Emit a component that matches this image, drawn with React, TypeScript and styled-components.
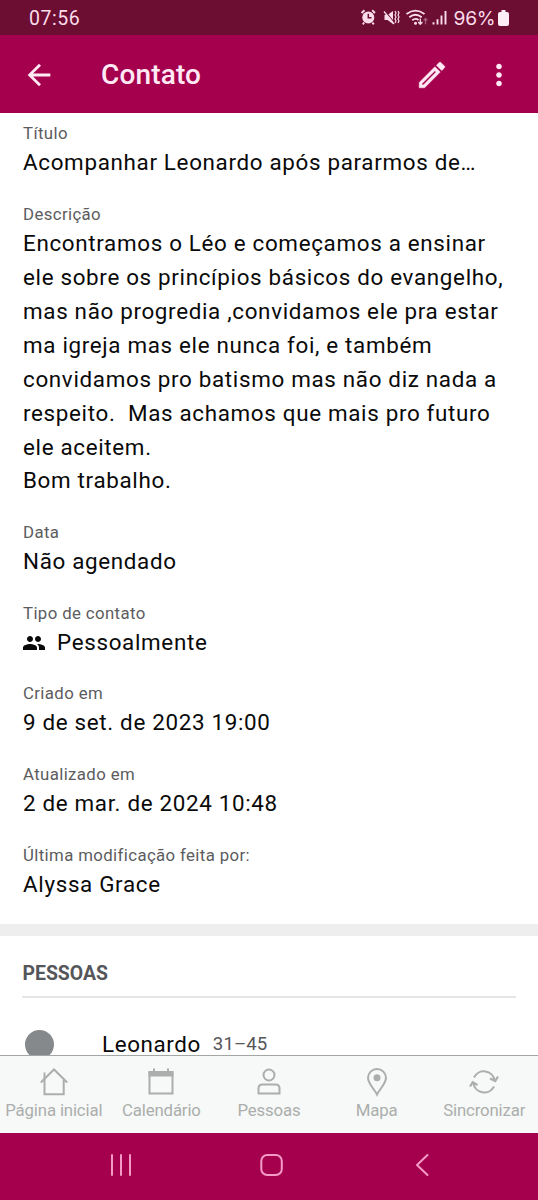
import React from "react";
import styled, { createGlobalStyle } from "styled-components";

const Global = createGlobalStyle`
  * { box-sizing: border-box; }
  body { margin: 0; background: #fff; font-family: Roboto, "Liberation Sans", sans-serif; }
  svg { display: block; flex: none; }
`;

const Screen = styled.div`
  display: flex;
  flex-direction: column;
  width: 538px;
  height: 1200px;
  overflow: hidden;
  background: #fff;
`;

const StatusBar = styled.div`
  display: flex;
  flex: none;
  align-items: center;
  justify-content: space-between;
  height: 35px;
  padding: 1px 29px 0;
  background: #6b0e32;
  color: #fbdcea;
  font-size: 19.5px;
`;

const Clock = styled.span`
  letter-spacing: 0.55px;
`;

const StatusIcons = styled.div`
  display: flex;
  align-items: center;
`;

const Battery = styled.span`
  width: 45px;
  padding-right: 2px;
  font-family: Inter, "Liberation Sans", sans-serif;
  font-size: 19.2px;
  letter-spacing: -0.2px;
  text-align: center;
`;

const AppBar = styled.header`
  display: flex;
  flex: none;
  align-items: center;
  height: 78px;
  padding: 1.5px 22px 0 22px;
  background: #a5004e;
  color: #ffe9f4;
`;

const PageTitle = styled.h1`
  flex: 1;
  margin: 0 0 0 45px;
  font-size: 28px;
  font-weight: 500;
  letter-spacing: 0.15px;
  line-height: 36px;
`;

const Actions = styled.div`
  display: flex;
  align-items: center;
  gap: 33.5px;
`;

const Content = styled.main`
  display: flex;
  flex: 1;
  min-height: 0;
  flex-direction: column;
  overflow: hidden;
`;

const Details = styled.section`
  display: flex;
  flex: none;
  flex-direction: column;
  gap: 22.7px;
  height: 811px;
  padding: 9.4px 23px 0;
`;

const Label = styled.div`
  margin-bottom: 2px;
  color: #5c5c5e;
  font-size: 16.8px;
  letter-spacing: 0.38px;
  line-height: 22px;
`;

const Value = styled.div`
  display: flex;
  align-items: center;
  gap: 12px;
  color: #0a0a0a;
  font-size: 22.4px;
  letter-spacing: 0.67px;
  line-height: 33.92px;
  white-space: pre;
`;

const Divider = styled.div`
  flex: none;
  height: 12px;
  background: #eeeeee;
`;

const People = styled.section`
  flex: none;
  padding: 0 22px;
`;

const SectionTitle = styled.h2`
  height: 62px;
  margin: 0;
  padding: 26px 0 0 0.5px;
  border-bottom: 2px solid #e6e6e7;
  color: #55565a;
  font-size: 19.4px;
  font-weight: 700;
  line-height: 24px;
`;

const PersonRow = styled.div`
  display: flex;
  align-items: center;
  padding: 31.5px 0 0 3px;
`;

const Avatar = styled.span`
  width: 29px;
  height: 29px;
  margin-right: 48px;
  border-radius: 50%;
  background: #85898c;
`;

const PersonName = styled.span`
  color: #0a0a0a;
  font-size: 22.4px;
  letter-spacing: 0.6px;
  line-height: 23px;
`;

const Age = styled.span`
  margin-left: 12px;
  color: #55565a;
  font-size: 18.6px;
  letter-spacing: 0.1px;
`;

const TabBar = styled.nav`
  display: grid;
  flex: none;
  grid-template-columns: repeat(5, 1fr);
  height: 78px;
  border-top: 1px solid #a2a6a5;
  background: #f7f9f8;
`;

const Tab = styled.div`
  display: flex;
  flex-direction: column;
  align-items: center;
  padding-top: 11px;
  color: #abaeac;
  font-size: 16.8px;
  letter-spacing: -0.15px;
  line-height: 22px;
  white-space: nowrap;
`;

const TabIcon = styled.svg`
  margin-bottom: 2px;
  fill: none;
  stroke: currentColor;
  stroke-width: 2;
`;

const SystemNav = styled.footer`
  display: grid;
  flex: none;
  grid-template-columns: 151px 155px 14px;
  align-items: center;
  height: 67px;
  padding: 0 0 3px 109px;
  background: #a5004e;
`;

const NavIcon = styled.svg`
  fill: none;
  stroke: #f49ac7;
  stroke-width: 2;
  stroke-linecap: round;
  stroke-linejoin: round;
`;

const PeopleIcon = () => (
  <svg width="22" height="14" viewBox="1 5 22 14" fill="#0a0a0a">
    <path d="M16 11c1.66 0 2.99-1.34 2.99-3S17.66 5 16 5s-3 1.34-3 3 1.34 3 3 3zm-8 0c1.66 0 2.99-1.34 2.99-3S9.66 5 8 5 5 6.34 5 8s1.34 3 3 3zm0 2c-2.33 0-7 1.17-7 3.5V19h14v-2.5c0-2.33-4.67-3.5-7-3.5zm8 0c-.29 0-.62.02-.97.05 1.16.84 1.97 1.97 1.97 3.45V19h6v-2.5c0-2.33-4.67-3.5-7-3.5z" />
  </svg>
);

const fields: { label: string; lines: string[]; icon?: React.ReactNode }[] = [
  { label: "Título", lines: ["Acompanhar Leonardo após pararmos de…"] },
  {
    label: "Descrição",
    lines: [
      "Encontramos o Léo e começamos a ensinar",
      "ele sobre os princípios básicos do evangelho,",
      "mas não progredia ,convidamos ele pra estar",
      "ma igreja mas ele nunca foi, e também",
      "convidamos pro batismo mas não diz nada a",
      "respeito.  Mas achamos que mais pro futuro",
      "ele aceitem.",
      "Bom trabalho.",
    ],
  },
  { label: "Data", lines: ["Não agendado"] },
  { label: "Tipo de contato", lines: ["Pessoalmente"], icon: <PeopleIcon /> },
  { label: "Criado em", lines: ["9 de set. de 2023 19:00"] },
  { label: "Atualizado em", lines: ["2 de mar. de 2024 10:48"] },
  { label: "Última modificação feita por:", lines: ["Alyssa Grace"] },
];

const tabs = [
  {
    name: "Página inicial",
    icon: (
      <>
        <path d="M5.5 13V27.2H24.7V13M1.8 15.5 15 2.5 28.2 15.5" />
        <path d="M5.5 13V5.5" />
      </>
    ),
  },
  {
    name: "Calendário",
    icon: (
      <>
        <path d="M3.5 5H26.5V26.5H3.5Z" />
        <path d="M2.5 4.5H27.5V9.5H2.5Z" fill="currentColor" stroke="none" />
        <path d="M8 1.5V6M22 1.5V6" />
      </>
    ),
  },
  {
    name: "Pessoas",
    icon: (
      <>
        <circle cx="15" cy="8" r="5.5" />
        <path d="M4.5 26.5V21.5Q4.5 17.5 8.5 17.5H21.5Q25.5 17.5 25.5 21.5V26.5Z" />
      </>
    ),
  },
  {
    name: "Mapa",
    icon: (
      <>
        <path d="M15 27.5C13 23 6 16.5 6 11A9 9 0 0 1 24 11C24 16.5 17 23 15 27.5Z" />
        <circle cx="15" cy="10.8" r="3.5" fill="currentColor" stroke="none" />
      </>
    ),
  },
  {
    name: "Sincronizar",
    icon: (
      <>
        <path d="M5 10.5A11 11 0 0 1 25.7 13.5M25 19.5A11 11 0 0 1 4.3 16" />
        <path d="M21 11.5 26.3 14 29 9.5M1 19.5 3.7 15.3 8.5 18" strokeWidth="2.2" />
      </>
    ),
  },
];

const StatusGlyphs = () => (
  <svg width="93" height="22" viewBox="0 0 93 22" fill="none" stroke="#fbdcea">
    <circle cx="8.3" cy="10.5" r="6" fill="#fbdcea" stroke="none" />
    <path d="M1.5 6 4.5 3.3M12.2 3.3 15 6M4.2 15.5 2.8 17.3M12.4 15.5 13.8 17.3" strokeWidth="1.9" />
    <path d="M8.3 6.8V10.8H11.5" stroke="#6b0e32" strokeWidth="1.5" />
    <path d="M24.5 8H27.5L33 4V17L27.5 13H24.5Z" fill="#fbdcea" stroke="none" />
    <path d="M24.8 3.5 35 16.5" stroke="#6b0e32" strokeWidth="1.2" />
    <path d="M24 4.5 34 17" strokeWidth="1.3" />
    <path d="M35 4 36 6 35 8 36 10 35 12 36 14 35 16M38 4 39 6 38 8 39 10 38 12 39 14 38 16" strokeWidth="1.2" />
    <path d="M46.5 7Q55.5 .2 64.5 7M49.3 10.3Q55.5 5.3 61.7 10.3M52.2 13.3Q55.5 10.7 58.5 13" strokeWidth="1.8" />
    <circle cx="55.5" cy="16.2" r="1.5" fill="#fbdcea" stroke="none" />
    <path d="M60.3 11.5V17M58.2 15 60.3 17.3 62.4 15" strokeWidth="1.3" />
    <path d="M65.5 17.2V12M63.7 13.5 65.5 11.5 67.3 13.5" stroke="#a95f7e" strokeWidth="1.2" />
    <path d="M73.5 15.2V17.5M77.5 12.2V17.5M81.5 8.5V17.5M85.5 4V17.5" strokeWidth="1.9" />
  </svg>
);

export default function App() {
  return (
    <Screen>
      <Global />
      <StatusBar>
        <Clock>07:56</Clock>
        <StatusIcons>
          <StatusGlyphs />
          <Battery>96%</Battery>
          <svg width="11" height="16" viewBox="0 0 11 16" fill="#ffedf5">
            <path d="M3.5 0h4v2H9q2 0 2 2v10q0 2-2 2H2q-2 0-2-2V4q0-2 2-2h1.500z" />
          </svg>
        </StatusIcons>
      </StatusBar>
      <AppBar>
        <svg width="34" height="34" viewBox="0 0 24 24" fill="currentColor">
          <path d="M20 11H7.83l5.59-5.59L12 4l-8 8 8 8 1.41-1.41L7.83 13H20v-2z" />
        </svg>
        <PageTitle>Contato</PageTitle>
        <Actions>
          <svg width="34" height="34" viewBox="0 0 24 24" fill="currentColor" stroke="currentColor" strokeWidth="0.4">
            <path d="M20.71 7.04c.39-.39.39-1.02 0-1.41l-2.34-2.34c-.39-.39-1.02-.39-1.41 0l-1.84 1.83 3.75 3.75zM3 17.25V21h3.75L17.81 9.93l-3.75-3.75zM6 19H5v-1l9.06-9.06.92.92z" />
          </svg>
          <svg width="34" height="34" viewBox="0 0 24 24" fill="currentColor">
            <path d="M12 8c1.1 0 2-.9 2-2s-.9-2-2-2-2 .9-2 2 .9 2 2 2zm0 2c-1.1 0-2 .9-2 2s.9 2 2 2 2-.9 2-2-.9-2-2-2zm0 6c-1.1 0-2 .9-2 2s.9 2 2 2 2-.9 2-2-.9-2-2-2z" />
          </svg>
        </Actions>
      </AppBar>
      <Content>
        <Details>
          {fields.map((field) => (
            <div key={field.label}>
              <Label>{field.label}</Label>
              <Value>
                {field.icon}
                <span>{field.lines.join("\n")}</span>
              </Value>
            </div>
          ))}
        </Details>
        <Divider />
        <People>
          <SectionTitle>PESSOAS</SectionTitle>
          <PersonRow>
            <Avatar />
            <PersonName>Leonardo</PersonName>
            <Age>31–45</Age>
          </PersonRow>
        </People>
      </Content>
      <TabBar>
        {tabs.map((tab) => (
          <Tab key={tab.name}>
            <TabIcon width="30" height="30" viewBox="0 0 30 30">
              {tab.icon}
            </TabIcon>
            {tab.name}
          </Tab>
        ))}
      </TabBar>
      <SystemNav>
        <NavIcon width="24" height="24" viewBox="0 0 24 24">
          <path d="M3 2V22M12 2V22M21 2V22" />
        </NavIcon>
        <NavIcon width="24" height="24" viewBox="0 0 24 24">
          <rect x="1.3" y="2" width="20.5" height="20" rx="6" />
        </NavIcon>
        <NavIcon width="14" height="24" viewBox="0 0 14 24">
          <path d="M12.5 2 2 12 12.5 22" />
        </NavIcon>
      </SystemNav>
    </Screen>
  );
}
